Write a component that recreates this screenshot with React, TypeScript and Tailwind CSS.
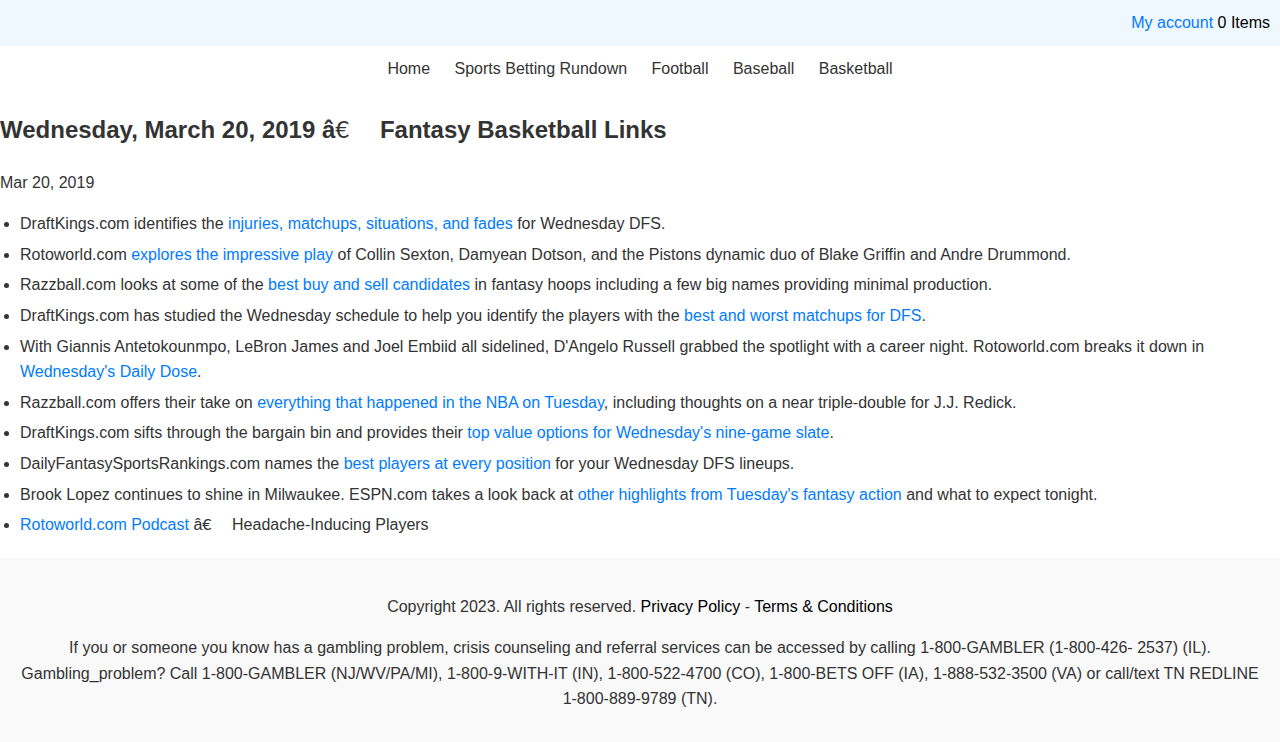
import { Fragment, type ReactNode } from "react";

function Link({ children }: { children: ReactNode }) {
  return (
    <a href="#" className="text-[#007bff]">
      {children}
    </a>
  );
}

function Euro() {
  return <span className="font-[Lato,sans-serif] leading-none font-normal">€</span>;
}

const navItems = ["Home", "Sports Betting Rundown", "Football", "Baseball", "Basketball"];

export default function App() {
  return (
    <div className="bg-white font-['Liberation_Sans',Arial,sans-serif] text-base leading-[1.6] text-[#333]">
      <header className="bg-[#f0f8ff] p-2.5 text-right text-black">
        <Link>My account</Link> <span>0 Items</span>
      </header>

      <nav className="p-2.5 text-center">
        {navItems.map((item) => (
          <Fragment key={item}>
            <a href="#" className="mx-2.5">
              {item}
            </a>{" "}
          </Fragment>
        ))}
      </nav>

      <main>
        <h2 className="my-5 text-2xl leading-[1.6] font-bold">
          Wednesday, March 20, 2019 â<Euro />
          {"\u2003 "}Fantasy Basketball Links
        </h2>
        <p className="my-4">Mar 20, 2019</p>
        <ul className="mb-5 flex list-disc flex-col gap-[5px] pl-5">
          <li>
            DraftKings.com identifies the <Link>injuries, matchups, situations, and fades</Link> for Wednesday DFS.
          </li>
          <li>
            Rotoworld.com <Link>explores the impressive play</Link> of Collin Sexton, Damyean Dotson, and the Pistons
            dynamic duo of Blake Griffin and Andre Drummond.
          </li>
          <li>
            Razzball.com looks at some of the <Link>best buy and sell candidates</Link> in fantasy hoops including a few
            big names providing minimal production.
          </li>
          <li>
            DraftKings.com has studied the Wednesday schedule to help you identify the players with the{" "}
            <Link>best and worst matchups for DFS</Link>.
          </li>
          <li>
            With Giannis Antetokounmpo, LeBron James and Joel Embiid all sidelined, D'Angelo Russell grabbed the
            spotlight with a career night. Rotoworld.com breaks it down in <Link>Wednesday's Daily Dose</Link>.
          </li>
          <li>
            Razzball.com offers their take on <Link>everything that happened in the NBA on Tuesday</Link>, including
            thoughts on a near triple-double for J.J. Redick.
          </li>
          <li>
            DraftKings.com sifts through the bargain bin and provides their{" "}
            <Link>top value options for Wednesday's nine-game slate</Link>.
          </li>
          <li>
            DailyFantasySportsRankings.com names the <Link>best players at every position</Link> for your Wednesday DFS
            lineups.
          </li>
          <li>
            Brook Lopez continues to shine in Milwaukee. ESPN.com takes a look back at{" "}
            <Link>other highlights from Tuesday's fantasy action</Link> and what to expect tonight.
          </li>
          <li>
            <Link>Rotoworld.com Podcast</Link> â<Euro />
            {"\u2003 "}Headache-Inducing Players
          </li>
        </ul>
      </main>

      <footer className="bg-[#f9f9f9] px-5 pt-9 pb-8 text-center">
        <p>
          Copyright 2023. All rights reserved.{" "}
          <a href="#" className="text-black">
            Privacy Policy
          </a>{" "}
          -{" "}
          <a href="#" className="text-black">
            Terms &amp; Conditions
          </a>
        </p>
        <p className="mt-4">
          If you or someone you know has a gambling problem, crisis counseling and referral services can be accessed by
          calling 1-800-GAMBLER (1-800-426- 2537) (IL). Gambling_problem? Call 1-800-GAMBLER (NJ/WV/PA/MI),
          1-800-9-WITH-IT (IN), 1-800-522-4700 (CO), 1-800-BETS OFF (IA), 1-888-532-3500 (VA) or call/text TN REDLINE
          1-800-889-9789 (TN).
        </p>
      </footer>
    </div>
  );
}
